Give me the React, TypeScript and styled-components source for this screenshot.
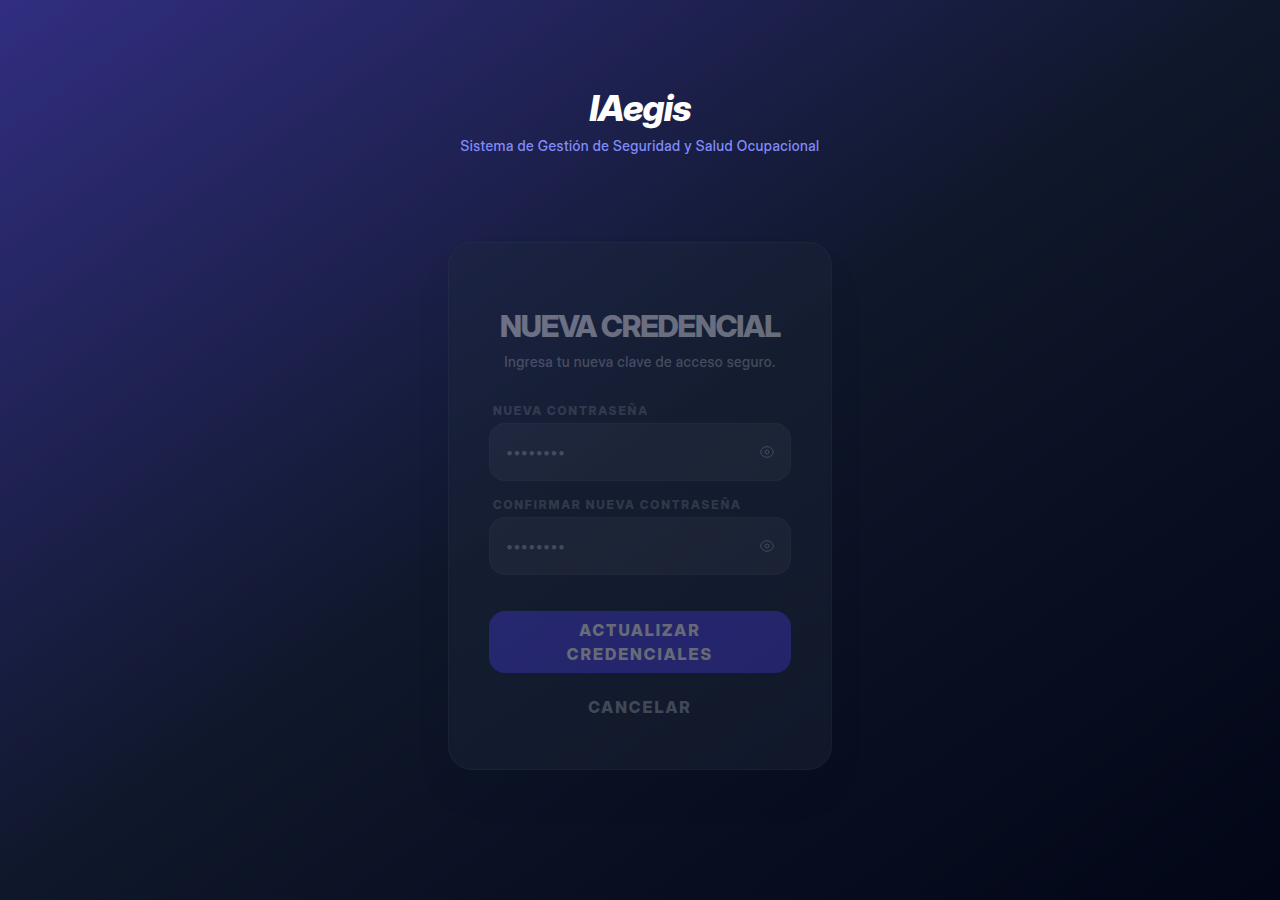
import React, { useState } from "react";
import styled, { createGlobalStyle } from "styled-components";

const GlobalStyle = createGlobalStyle`
  *, *::before, *::after { box-sizing: border-box; }
  body {
    margin: 0;
    background: #020617;
    font-family: "Inter Display", Inter, "Liberation Sans", sans-serif;
  }
  button, input { font-family: inherit; }
`;

const Page = styled.div`
  min-height: 100vh;
  display: flex;
  flex-direction: column;
  align-items: center;
  padding: 88px 16px 64px;
  background: linear-gradient(to bottom right, #312e81, #0f172a, #020617);
`;

const Brand = styled.header`
  text-align: center;
  margin-bottom: 86px;
`;

const BrandName = styled.h1`
  margin: 0 0 8px;
  font-size: 36px;
  line-height: 40px;
  font-weight: 800;
  font-style: italic;
  letter-spacing: -0.025em;
  color: #fff;
`;

const Tagline = styled.p`
  margin: 0;
  font-size: 14px;
  line-height: 20px;
  font-weight: 500;
  letter-spacing: 0.03em;
  color: #818cf8;
`;

const Card = styled.form`
  width: 100%;
  max-width: 384px;
  padding: 65px 40px 40px;
  border: 1px solid rgba(255, 255, 255, 0.08);
  border-radius: 24px;
  background: #1e293b;
  box-shadow: 0 24px 48px -12px rgba(0, 0, 0, 0.1);
  opacity: 0.37;
`;

const CardTitle = styled.h2`
  margin: 0 0 8px;
  text-align: center;
  white-space: nowrap;
  font-size: 30px;
  line-height: 36px;
  font-weight: 800;
  letter-spacing: -0.04em;
  color: #fff;
`;

const CardText = styled.p`
  margin: 0 0 31px;
  text-align: center;
  font-size: 14px;
  line-height: 20px;
  font-weight: 500;
  letter-spacing: 0.03em;
  color: #9ca3af;
`;

const Field = styled.div`
  margin-bottom: 16px;
`;

const Label = styled.label`
  display: block;
  margin: 0 4px 4px;
  font-size: 12px;
  line-height: 16px;
  font-weight: 800;
  letter-spacing: 0.15em;
  color: #6b7280;
`;

const InputShell = styled.div`
  display: flex;
  align-items: center;
  height: 58px;
  padding: 0 16px;
  border: 1px solid rgba(255, 255, 255, 0.06);
  border-radius: 16px;
  background: rgba(255, 255, 255, 0.1);
`;

const Input = styled.input`
  flex: 1;
  min-width: 0;
  padding: 0;
  border: 0;
  outline: 0;
  background: transparent;
  font-size: 14px;
  line-height: 24px;
  letter-spacing: 0.03em;
  color: #fff;
  &::placeholder { color: #9ca3af; opacity: 1; }
`;

const RevealButton = styled.button`
  display: flex;
  padding: 0;
  border: 0;
  background: none;
  color: #9ca3af;
  cursor: pointer;
`;

const ActionButton = styled.button<{ $primary?: boolean }>`
  display: block;
  width: 100%;
  margin-top: ${(p) => (p.$primary ? 36 : 12)}px;
  padding: ${(p) => (p.$primary ? "7px 64px" : "10px 16px")};
  border: 0;
  border-radius: 16px;
  background: ${(p) => (p.$primary ? "#4f46e5" : "transparent")};
  color: ${(p) => (p.$primary ? "#fff" : "#9ca3af")};
  font-size: 16px;
  line-height: 24px;
  font-weight: 800;
  letter-spacing: 2px;
  cursor: pointer;
`;

const EyeIcon = () => (
  <svg width="14" height="14" viewBox="0 0 14 14" fill="none" stroke="currentColor" strokeWidth="1" aria-hidden="true">
    <path d="M0.500 7C1.300 3.700 4 1.700 7 1.700S12.700 3.700 13.500 7C12.700 10.300 10 12.300 7 12.300S1.300 10.300 0.500 7Z" />
    <circle cx="7" cy="7" r="2" />
  </svg>
);

function PasswordField({ id, label }: { id: string; label: string }) {
  const [visible, setVisible] = useState(false);
  return (
    <Field>
      <Label htmlFor={id}>{label}</Label>
      <InputShell>
        <Input id={id} type={visible ? "text" : "password"} placeholder="••••••••" autoComplete="new-password" />
        <RevealButton
          type="button"
          aria-label={visible ? "Ocultar contraseña" : "Mostrar contraseña"}
          onClick={() => setVisible(!visible)}
        >
          <EyeIcon />
        </RevealButton>
      </InputShell>
    </Field>
  );
}

export default function App() {
  return (
    <>
      <GlobalStyle />
      <Page>
        <Brand>
          <BrandName>IAegis</BrandName>
          <Tagline>Sistema de Gestión de Seguridad y Salud Ocupacional</Tagline>
        </Brand>
        <Card onSubmit={(e) => e.preventDefault()}>
          <CardTitle>NUEVA CREDENCIAL</CardTitle>
          <CardText>Ingresa tu nueva clave de acceso seguro.</CardText>
          <PasswordField id="new-password" label="NUEVA CONTRASEÑA" />
          <PasswordField id="confirm-password" label="CONFIRMAR NUEVA CONTRASEÑA" />
          <ActionButton type="submit" $primary>ACTUALIZAR CREDENCIALES</ActionButton>
          <ActionButton type="button">CANCELAR</ActionButton>
        </Card>
      </Page>
    </>
  );
}
